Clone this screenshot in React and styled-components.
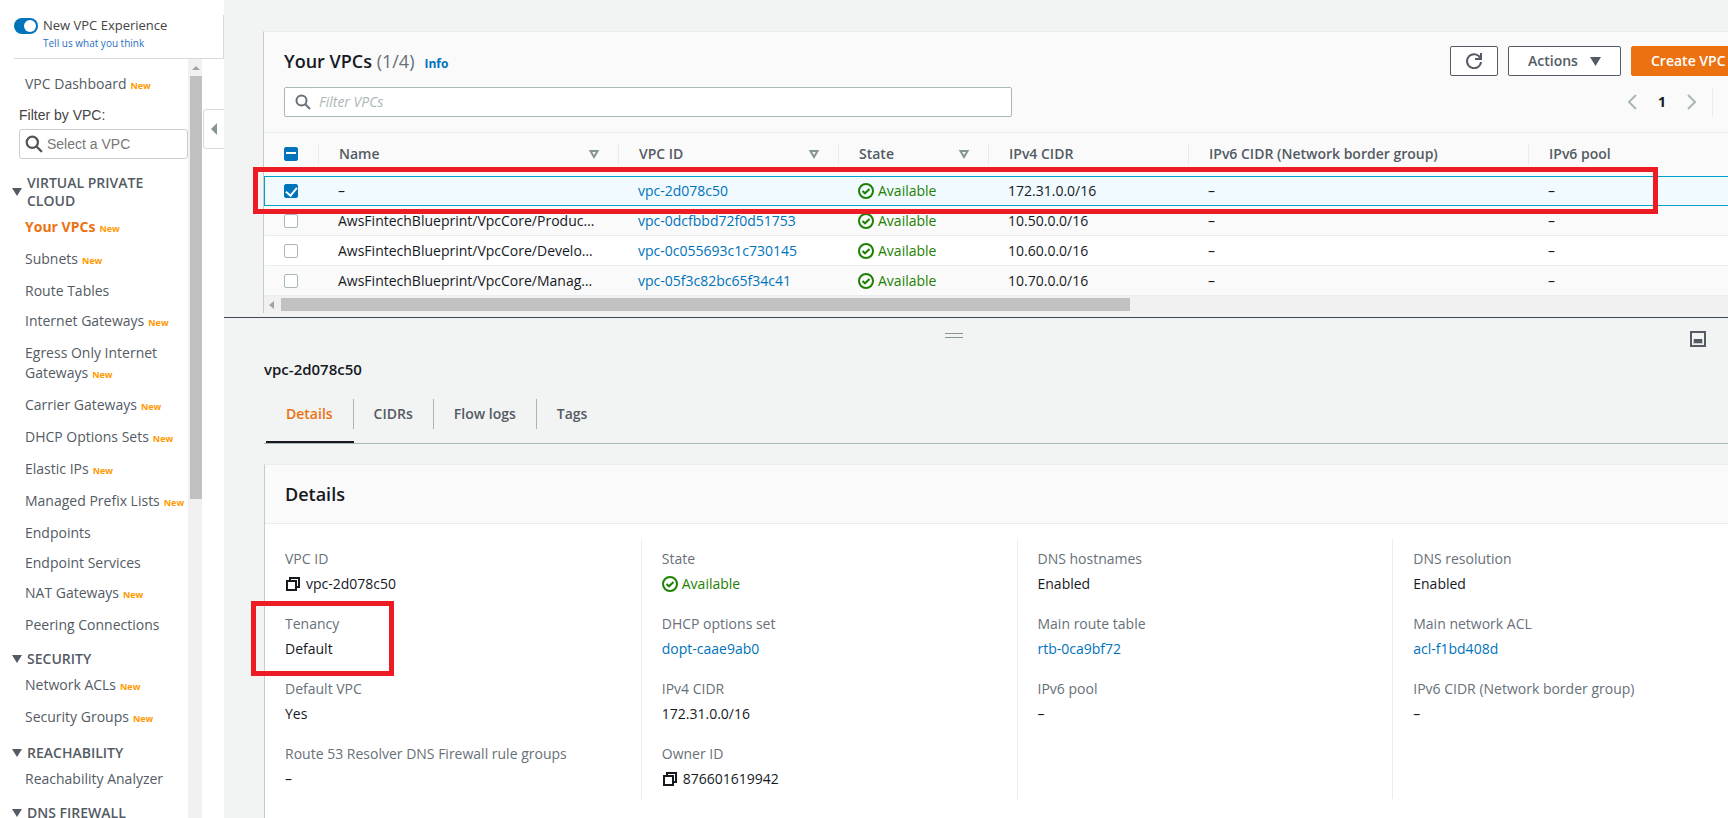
import React, { useState } from "react";
import styled, { createGlobalStyle, css } from "styled-components";

const GlobalStyle = createGlobalStyle`
    * {
        box-sizing: border-box;
    }

    body {
        margin: 0;
        overflow: hidden;
        background-color: #f2f3f3;
        color: #16191f;
        font-family: "Open Sans", "Noto Sans", sans-serif;
        font-size: 14px;
        line-height: 20px;
    }

    button,
    input {
        font: inherit;
    }

    svg {
        display: block;
        flex: none;
    }
`;

const Page = styled.div`
    display: grid;
    grid-template-columns: 224px minmax(0, 1fr);
    height: 100vh;
    overflow: hidden;
`;

/* Sidebar */

const Sidebar = styled.aside`
    display: flex;
    flex-direction: column;
    min-height: 0;
    padding-top: 15px;
    background-color: #fff;
`;
const Experience = styled.div`
    display: flex;
    gap: 5px;
    height: 44px;
    margin-left: 14px;
    border-right: 1px solid #d5dbdb;
    border-bottom: 1px solid #d5dbdb;
    color: #444;
    font-size: 13px;
`;
const Toggle = styled.input`
    appearance: none;
    width: 24px;
    height: 16px;
    margin: 3px 0 0;
    padding: 2px;
    border-radius: 8px;
    background-color: #0073bb;

    &::after {
        content: "";
        display: block;
        width: 12px;
        height: 12px;
        margin-left: auto;
        border-radius: 50%;
        background-color: #fff;
    }
`;
const ExperienceText = styled.div`
    display: flex;
    flex-direction: column;
`;
const FeedbackLink = styled.a`
    color: #2a6fc0;
    font-size: 10px;
    line-height: 16px;
    text-decoration: none;
`;
const SidebarBody = styled.div`
    display: flex;
    flex: 1;
    min-height: 0;
`;
const Nav = styled.nav`
    width: 188px;
    padding-top: 15px;
    overflow: hidden;
    color: #545b64;
`;
const NavList = styled.ul`
    margin: 0;
    padding: 0 0 0 25px;
    list-style: none;
`;
const NavItem = styled.li`
    padding-bottom: ${(props) => (props.$isNew ? 12 : 10)}px;
`;
const NavLink = styled.a`
    color: ${(props) => (props.$active ? "#ec7211" : "#545b64")};
    font-weight: ${(props) => (props.$active ? 700 : 400)};
    text-decoration: none;
`;
const NewBadge = styled.span`
    margin-left: 4px;
    color: #ff9900;
    font-size: 9px;
    font-weight: 700;
    line-height: 1;
`;
const NavHeading = styled.h2`
    display: flex;
    align-items: center;
    gap: 5px;
    margin: 5px 0 7px;
    padding: 0 20px 0 12px;
    font-size: 14px;
    font-weight: 600;
    line-height: 18px;
`;
const VpcFilter = styled.div`
    margin: 0 0 15px 19px;
    color: #444;
    font-family: "Liberation Sans", Arial, sans-serif;
    font-size: 14px;
    line-height: 18px;

    label {
        display: block;
        margin-bottom: 5px;
    }
`;
const VpcFilterBox = styled.div`
    display: flex;
    align-items: center;
    gap: 4px;
    height: 30px;
    padding: 0 5px;
    border: 1px solid #ccc;
    border-radius: 3px;
    background-color: #fff;

    input {
        min-width: 0;
        padding: 0;
        border: 0;
        outline: 0;
    }

    input::placeholder {
        color: #777;
    }
`;
const NavTrack = styled.div`
    display: flex;
    flex-direction: column;
    align-items: center;
    width: 14px;
    padding: 7px 0 0 2px;
    background-color: #f1f1f1;
`;
const NavThumb = styled.div`
    width: 12px;
    height: 423px;
    margin-top: 6px;
    background-color: #c1c1c1;
`;
const CollapseButton = styled.button`
    display: grid;
    place-items: center;
    width: 21px;
    height: 40px;
    margin: 50px 0 0 auto;
    padding: 0;
    border: 1px solid #d5dbdb;
    border-right: 0;
    border-radius: 4px 0 0 4px;
    background-color: #fff;
`;

/* Main area */

const Main = styled.main`
    min-width: 0;
    overflow: hidden;
`;
const TopPane = styled.section`
    margin-right: -40px;
    padding: 31px 0 0 39px;
`;
const Card = styled.div`
    border-top: 1px solid #eaeded;
    border-left: 1px solid #c6cccc;
    background-color: #fff;
`;
const CardHeader = styled.div`
    display: flex;
    flex-direction: column;
    gap: 11px;
    padding: 14px 20px 15px;
    border-bottom: 1px solid #eaeded;
    background-color: #fafafa;
`;
const HeaderRow = styled.div`
    display: flex;
    align-items: center;
    justify-content: space-between;
`;
const Title = styled.h1`
    margin: 0;
    font-size: 18px;
    font-weight: 600;
    line-height: 28px;
`;
const Count = styled.span`
    color: #687078;
    font-weight: 400;
`;
const InfoLink = styled.a`
    margin-left: 10px;
    color: #0073bb;
    font-size: 12px;
    font-weight: 700;
    line-height: 1;
    text-decoration: none;
`;
const ButtonGroup = styled.div`
    display: flex;
    gap: 10px;
`;
const Button = styled.button`
    display: flex;
    align-items: center;
    justify-content: space-between;
    gap: 10px;
    height: 30px;
    min-width: ${(props) => props.$width}px;
    padding: 0 19px;
    border: 1px solid #545b64;
    border-radius: 2px;
    background-color: #fff;
    color: #545b64;
    font-weight: 600;
    white-space: nowrap;

    ${(props) =>
        props.$primary &&
        css`
            border-color: #ec7211;
            background-color: #ec7211;
            color: #fff;
        `}

    ${(props) =>
        props.$icon &&
        css`
            padding: 0 15px;
        `}
`;
const SearchBox = styled.div`
    display: flex;
    align-items: center;
    gap: 8px;
    width: 100%;
    max-width: 728px;
    height: 30px;
    padding: 0 10px;
    border: 1px solid #aab7b8;
    border-radius: 2px;
    background-color: #fff;

    input {
        flex: 1;
        padding: 0;
        border: 0;
        outline: 0;
    }

    input::placeholder {
        color: #aab7b8;
        font-style: italic;
    }
`;
const Pagination = styled.div`
    display: flex;
    align-items: center;
    height: 30px;
    color: #16191f;
    font-weight: 700;
`;
const PlainButton = styled.button`
    display: block;
    padding: 0;
    border: 0;
    background: none;
`;
const PageNumber = styled.span`
    width: 50px;
    text-align: center;
`;
const Settings = styled.div`
    display: flex;
    align-items: center;
    height: 30px;
    margin-left: 16px;
    padding-left: 19px;
    border-left: 1px solid #eaeded;
`;

/* VPC table */

const TableArea = styled.div`
    position: relative;
`;
const Highlight = styled.div`
    position: absolute;
    border: 5px solid #ed1c24;
    pointer-events: none;
`;
const RowHighlight = styled(Highlight)`
    top: 34px;
    right: 110px;
    left: -11px;
    height: 47px;
`;
const FieldHighlight = styled(Highlight)`
    top: -13px;
    left: -34px;
    width: 143px;
    height: 75px;
`;
const Table = styled.table`
    width: 100%;
    border-spacing: 0;
    table-layout: fixed;
`;
const HeadCell = styled.th`
    height: 43px;
    padding: 0 0 2px;
    background-color: #fafafa;
    color: #545b64;
    font-weight: 600;
    text-align: left;
    white-space: nowrap;
`;
const HeadContent = styled.div`
    display: flex;
    align-items: center;
    justify-content: space-between;
    height: 22px;
    padding: 0 19px 0 20px;
    border-left: ${(props) => (props.$first ? "0" : "1px solid #eaeded")};
`;
const Row = styled.tr`
    background-color: ${(props) => (props.$striped ? "#fafafa" : "#fff")};

    ${(props) =>
        props.$selected &&
        css`
            background-color: #f1faff;
        `}
`;
const Cell = styled.td`
    height: 30px;
    padding: 0 20px;
    border-top: ${(props) => (props.$selected ? "1px solid #00a1c9" : "0")};
    border-bottom: 1px solid ${(props) => (props.$selected ? "#00a1c9" : "#eaeded")};
    white-space: nowrap;

    &:first-child {
        padding-left: 19px;
        border-left: 1px solid ${(props) => (props.$selected ? "#00a1c9" : "transparent")};
    }
`;
const Checkbox = styled.input`
    appearance: none;
    display: grid;
    place-items: center;
    width: 14px;
    height: 14px;
    margin: 0;
    border: 1px solid #aab7b8;
    border-radius: 2px;
    background-color: #fff;

    &:checked {
        border-color: #0073bb;
        background-color: #0073bb;
    }

    &:checked::after {
        content: "";
        width: ${(props) => (props.$mixed ? 10 : 5)}px;
        height: ${(props) => (props.$mixed ? 2 : 9)}px;
        margin-bottom: ${(props) => (props.$mixed ? 0 : 2)}px;
        border: solid #fff;
        border-width: ${(props) => (props.$mixed ? "2px 0 0" : "0 2px 2px 0")};
        transform: ${(props) => (props.$mixed ? "none" : "rotate(40deg)")};
    }
`;
const Link = styled.a`
    color: #0073bb;
    text-decoration: none;
`;
const StatusText = styled.span`
    display: flex;
    align-items: center;
    gap: 4px;
    color: #1d8102;
`;
const TableTrack = styled.div`
    display: flex;
    align-items: center;
    gap: 7px;
    height: 17px;
    margin-bottom: 4px;
    padding-left: 5px;
    background-color: #f1f1f1;
`;
const TableThumb = styled.div`
    width: 849px;
    height: 13px;
    background-color: #c1c1c1;
`;

/* Detail pane */

const DetailPane = styled.section`
    border-top: 1px solid #3b4754;
`;
const PaneToolbar = styled.div`
    display: grid;
    grid-template-columns: 1fr 18px 1fr;
    align-items: start;
    height: 41px;
    padding: 13px 44px 0 0;
`;
const DragHandle = styled.div`
    grid-column: 2;
    height: 5px;
    margin-top: 2px;
    border-top: 1px solid #879596;
    border-bottom: 1px solid #879596;
`;
const PaneButton = styled(PlainButton)`
    justify-self: end;
    margin-right: -22px;
`;
const PaneBody = styled.div`
    margin-right: -40px;
    padding-left: 40px;
`;
const PaneTitle = styled.h2`
    margin: 0 0 20px;
    font-size: 15px;
    font-weight: 600;
    line-height: 20px;
`;
const TabList = styled.div`
    display: flex;
    margin-bottom: 20px;
    padding-left: 2px;
    border-bottom: 1px solid #aab7b8;
`;
const Tab = styled.button`
    padding: 0 0 12px;
    border: 0;
    border-bottom: 2px solid ${(props) => (props.$active ? "#16191f" : "transparent")};
    background: none;
    color: ${(props) => (props.$active ? "#ec7211" : "#545b64")};
    font-weight: 600;
    line-height: 30px;

    span {
        display: block;
        padding: 0 20px;
        border-right: 1px solid #aab7b8;
    }

    &:last-child span {
        border-right: 0;
    }
`;
const DetailsHeader = styled.div`
    padding: 15px 20px;
    border-bottom: 1px solid #eaeded;
    background-color: #fafafa;
`;
const DetailColumns = styled.div`
    display: grid;
    grid-template-columns: repeat(4, 1fr);
    padding: 15px 0 20px;
`;
const DetailColumn = styled.dl`
    display: flex;
    flex-direction: column;
    gap: 20px;
    margin: 0;
    padding: 10px 20px;
    border-left: 1px solid #eaeded;

    &:first-child {
        border-left: 0;
    }
`;
const Field = styled.div`
    position: relative;

    dt {
        margin-bottom: 5px;
        color: #687078;
    }

    dd {
        display: flex;
        align-items: center;
        gap: 5px;
        margin: 0;
    }
`;

const navSections = [
    {
        title: "VIRTUAL PRIVATE CLOUD",
        items: [
            { label: "Your VPCs", isNew: true, active: true },
            { label: "Subnets", isNew: true },
            { label: "Route Tables" },
            { label: "Internet Gateways", isNew: true },
            { label: "Egress Only Internet Gateways", isNew: true },
            { label: "Carrier Gateways", isNew: true },
            { label: "DHCP Options Sets", isNew: true },
            { label: "Elastic IPs", isNew: true },
            { label: "Managed Prefix Lists", isNew: true },
            { label: "Endpoints" },
            { label: "Endpoint Services" },
            { label: "NAT Gateways", isNew: true },
            { label: "Peering Connections" },
        ],
    },
    {
        title: "SECURITY",
        items: [
            { label: "Network ACLs", isNew: true },
            { label: "Security Groups", isNew: true },
        ],
    },
    { title: "REACHABILITY", items: [{ label: "Reachability Analyzer" }] },
    { title: "DNS FIREWALL", items: [] },
];

const columns = [
    { label: "Name", width: 300, sortable: true },
    { label: "VPC ID", width: 220, sortable: true },
    { label: "State", width: 150, sortable: true },
    { label: "IPv4 CIDR", width: 200 },
    { label: "IPv6 CIDR (Network border group)", width: 340 },
    { label: "IPv6 pool" },
];

const vpcs = [
    { name: "–", id: "vpc-2d078c50", cidr: "172.31.0.0/16" },
    { name: "AwsFintechBlueprint/VpcCore/Produc…", id: "vpc-0dcfbbd72f0d51753", cidr: "10.50.0.0/16" },
    { name: "AwsFintechBlueprint/VpcCore/Develo…", id: "vpc-0c055693c1c730145", cidr: "10.60.0.0/16" },
    { name: "AwsFintechBlueprint/VpcCore/Manag…", id: "vpc-05f3c82bc65f34c41", cidr: "10.70.0.0/16" },
];

const details = [
    [
        { label: "VPC ID", value: "vpc-2d078c50", type: "copy" },
        { label: "Tenancy", value: "Default", highlighted: true },
        { label: "Default VPC", value: "Yes" },
        { label: "Route 53 Resolver DNS Firewall rule groups", value: "–" },
    ],
    [
        { label: "State", value: "Available", type: "status" },
        { label: "DHCP options set", value: "dopt-caae9ab0", type: "link" },
        { label: "IPv4 CIDR", value: "172.31.0.0/16" },
        { label: "Owner ID", value: "876601619942", type: "copy" },
    ],
    [
        { label: "DNS hostnames", value: "Enabled" },
        { label: "Main route table", value: "rtb-0ca9bf72", type: "link" },
        { label: "IPv6 pool", value: "–" },
    ],
    [
        { label: "DNS resolution", value: "Enabled" },
        { label: "Main network ACL", value: "acl-f1bd408d", type: "link" },
        { label: "IPv6 CIDR (Network border group)", value: "–" },
    ],
];

const tabs = ["Details", "CIDRs", "Flow logs", "Tags"];

const CaretDown = ({ size = 10 }) => (
    <svg width={size} height={size} viewBox="0 0 10 10" fill="currentColor">
        <path d="M0 1h10L5 9z" />
    </svg>
);

const SortIcon = () => (
    <svg width="10" height="10" viewBox="0 0 10 10" fill="none" stroke="#879596" strokeWidth="2">
        <path d="M1.5 2h7L5 8z" />
    </svg>
);

const ArrowLeft = ({ width = 5, height = 8, color = "#a3a3a3" }) => (
    <svg width={width} height={height} viewBox="0 0 5 8" fill={color} preserveAspectRatio="none">
        <path d="M5 0v8L0 4z" />
    </svg>
);

const SearchIcon = ({ size = 16, color = "#687078", weight = 2 }) => (
    <svg width={size} height={size} viewBox="0 0 16 16" fill="none" stroke={color} strokeWidth={weight}>
        <circle cx="6.5" cy="6.5" r="5" />
        <path d="M10 10l5 5" />
    </svg>
);

const RefreshIcon = () => (
    <svg width="16" height="16" viewBox="0 0 16 16" fill="none" stroke="#545b64" strokeWidth="2">
        <path d="M15 0v6H9" />
        <path d="M14.5 5.5A7 7 0 1 0 15 9" />
    </svg>
);

const Chevron = ({ direction }) => (
    <svg width="9" height="16" viewBox="0 0 9 16" fill="none" stroke="#aab7b8" strokeWidth="2">
        <path d={direction === "left" ? "M8 1L1 8l7 7" : "M1 1l7 7-7 7"} />
    </svg>
);

const GearIcon = () => (
    <svg width="16" height="16" viewBox="0 0 16 16" fill="none" stroke="#545b64" strokeWidth="2">
        <circle cx="8" cy="8" r="2" />
        <circle cx="8" cy="8" r="6" />
    </svg>
);

const SplitIcon = () => (
    <svg width="16" height="16" viewBox="0 0 16 16" fill="none">
        <path d="M1 1h14v14H1z" stroke="#545b64" strokeWidth="2" />
        <path d="M3 8h10v5H3z" fill="#c6cccc" />
        <path d="M4 8h8v4H4z" fill="#545b64" />
    </svg>
);

const CheckCircle = () => (
    <svg width="16" height="16" viewBox="0 0 16 16" fill="none" stroke="#1d8102" strokeWidth="2">
        <circle cx="8" cy="8" r="7" />
        <path d="M4.5 8L7 10.3 11.5 6" />
    </svg>
);

const CopyIcon = () => (
    <svg width="16" height="16" viewBox="0 0 16 16" fill="none" stroke="#16191f" strokeWidth="2">
        <path d="M2 5h9v9H2z" />
        <path d="M5 5V2h9v9h-3" />
    </svg>
);

const Status = ({ children }) => (
    <StatusText>
        <CheckCircle />
        {children}
    </StatusText>
);

const NavEntry = ({ label, isNew, active }) => (
    <NavItem $isNew={isNew}>
        <NavLink href="#" $active={active}>
            {label}
            {isNew && <NewBadge>New</NewBadge>}
        </NavLink>
    </NavItem>
);

const SideNav = () => (
    <Sidebar>
        <Experience>
            <Toggle type="checkbox" id="experience" defaultChecked />
            <ExperienceText>
                <label htmlFor="experience">New VPC Experience</label>
                <FeedbackLink href="#">Tell us what you think</FeedbackLink>
            </ExperienceText>
        </Experience>
        <SidebarBody>
            <Nav>
                <NavList>
                    <NavEntry label="VPC Dashboard" isNew />
                </NavList>
                <VpcFilter>
                    <label htmlFor="vpc-filter">Filter by VPC:</label>
                    <VpcFilterBox>
                        <SearchIcon size={18} color="#555" weight={2} />
                        <input id="vpc-filter" placeholder="Select a VPC" />
                    </VpcFilterBox>
                </VpcFilter>
                {navSections.map((section) => (
                    <React.Fragment key={section.title}>
                        <NavHeading>
                            <CaretDown />
                            {section.title}
                        </NavHeading>
                        <NavList>
                            {section.items.map((item) => (
                                <NavEntry key={item.label} {...item} />
                            ))}
                        </NavList>
                    </React.Fragment>
                ))}
            </Nav>
            <NavTrack>
                <svg width="8" height="4" viewBox="0 0 8 4" fill="#a3a3a3">
                    <path d="M0 4h8L4 0z" />
                </svg>
                <NavThumb />
            </NavTrack>
            <CollapseButton aria-label="Collapse navigation">
                <ArrowLeft width={6} height={12} color="#879596" />
            </CollapseButton>
        </SidebarBody>
    </Sidebar>
);

const VpcTable = () => (
    <TableArea>
        <Table>
            <colgroup>
                <col width="54" />
                {columns.map((column) => (
                    <col key={column.label} width={column.width} />
                ))}
            </colgroup>
            <thead>
                <tr>
                    <HeadCell>
                        <HeadContent $first>
                            <Checkbox type="checkbox" aria-label="Select all" defaultChecked $mixed />
                        </HeadContent>
                    </HeadCell>
                    {columns.map((column) => (
                        <HeadCell key={column.label}>
                            <HeadContent>
                                {column.label}
                                {column.sortable && <SortIcon />}
                            </HeadContent>
                        </HeadCell>
                    ))}
                </tr>
            </thead>
            <tbody>
                {vpcs.map((vpc, index) => {
                    const selected = index === 0;
                    return (
                        <Row key={vpc.id} $selected={selected} $striped={index % 2 === 1}>
                            <Cell $selected={selected}>
                                <Checkbox type="checkbox" aria-label={vpc.id} defaultChecked={selected} />
                            </Cell>
                            <Cell $selected={selected}>{vpc.name}</Cell>
                            <Cell $selected={selected}>
                                <Link href="#">{vpc.id}</Link>
                            </Cell>
                            <Cell $selected={selected}>
                                <Status>Available</Status>
                            </Cell>
                            <Cell $selected={selected}>{vpc.cidr}</Cell>
                            <Cell $selected={selected}>–</Cell>
                            <Cell $selected={selected}>–</Cell>
                        </Row>
                    );
                })}
            </tbody>
        </Table>
        <TableTrack>
            <ArrowLeft />
            <TableThumb />
        </TableTrack>
        <RowHighlight />
    </TableArea>
);

const DetailValue = ({ type, value }) => {
    if (type === "link") return <Link href="#">{value}</Link>;
    if (type === "status") return <Status>{value}</Status>;
    if (type === "copy") {
        return (
            <>
                <PlainButton aria-label="Copy">
                    <CopyIcon />
                </PlainButton>
                {value}
            </>
        );
    }
    return value;
};

const App = () => {
    const [activeTab, setActiveTab] = useState("Details");

    return (
        <Page>
            <GlobalStyle />
            <SideNav />
            <Main>
                <TopPane>
                    <Card>
                        <CardHeader>
                            <HeaderRow>
                                <Title>
                                    Your VPCs <Count>(1/4)</Count>
                                    <InfoLink href="#">Info</InfoLink>
                                </Title>
                                <ButtonGroup>
                                    <Button $icon $width={48} aria-label="Refresh">
                                        <RefreshIcon />
                                    </Button>
                                    <Button $width={113}>
                                        Actions
                                        <CaretDown size={11} />
                                    </Button>
                                    <Button $primary $width={117}>
                                        Create VPC
                                    </Button>
                                </ButtonGroup>
                            </HeaderRow>
                            <HeaderRow>
                                <SearchBox>
                                    <SearchIcon />
                                    <input aria-label="Filter VPCs" placeholder="Filter VPCs" />
                                </SearchBox>
                                <Pagination>
                                    <PlainButton aria-label="Previous page">
                                        <Chevron direction="left" />
                                    </PlainButton>
                                    <PageNumber>1</PageNumber>
                                    <PlainButton aria-label="Next page">
                                        <Chevron direction="right" />
                                    </PlainButton>
                                    <Settings>
                                        <PlainButton aria-label="Preferences">
                                            <GearIcon />
                                        </PlainButton>
                                    </Settings>
                                </Pagination>
                            </HeaderRow>
                        </CardHeader>
                        <VpcTable />
                    </Card>
                </TopPane>
                <DetailPane>
                    <PaneToolbar>
                        <DragHandle />
                        <PaneButton aria-label="Split panel position">
                            <SplitIcon />
                        </PaneButton>
                    </PaneToolbar>
                    <PaneBody>
                        <PaneTitle>vpc-2d078c50</PaneTitle>
                        <TabList role="tablist">
                            {tabs.map((tab) => (
                                <Tab
                                    key={tab}
                                    role="tab"
                                    aria-selected={tab === activeTab}
                                    $active={tab === activeTab}
                                    onClick={() => setActiveTab(tab)}
                                >
                                    <span>{tab}</span>
                                </Tab>
                            ))}
                        </TabList>
                        <Card>
                            <DetailsHeader>
                                <Title as="h2">Details</Title>
                            </DetailsHeader>
                            <DetailColumns>
                                {details.map((fields, index) => (
                                    <DetailColumn key={index}>
                                        {fields.map((field) => (
                                            <Field key={field.label}>
                                                <dt>{field.label}</dt>
                                                <dd>
                                                    <DetailValue type={field.type} value={field.value} />
                                                </dd>
                                                {field.highlighted && <FieldHighlight as="dd" />}
                                            </Field>
                                        ))}
                                    </DetailColumn>
                                ))}
                            </DetailColumns>
                        </Card>
                    </PaneBody>
                </DetailPane>
            </Main>
        </Page>
    );
};

export default App;
